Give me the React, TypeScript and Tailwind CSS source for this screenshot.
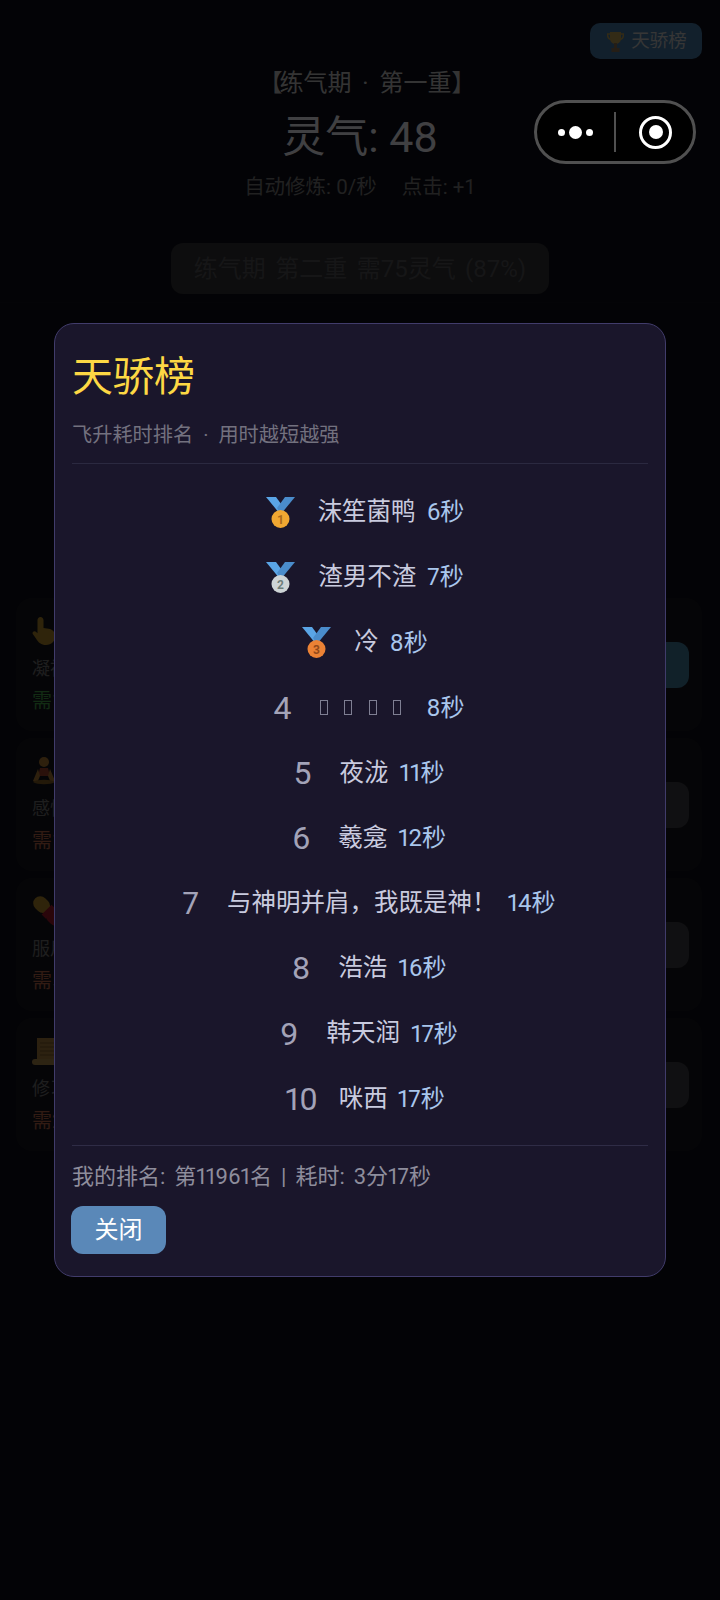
type Entry = { rank: number; name: string; time: string };

const entries: Entry[] = [
  { rank: 1, name: "沫笙菌鸭", time: "6秒" },
  { rank: 2, name: "渣男不渣", time: "7秒" },
  { rank: 3, name: "冷", time: "8秒" },
  { rank: 4, name: "", time: "8秒" },
  { rank: 5, name: "夜泷", time: "11秒" },
  { rank: 6, name: "羲龛", time: "12秒" },
  { rank: 7, name: "与神明并肩，我既是神！", time: "14秒" },
  { rank: 8, name: "浩浩", time: "16秒" },
  { rank: 9, name: "韩天润", time: "17秒" },
  { rank: 10, name: "咪西", time: "17秒" },
];

const medalFill: Record<number, { disc: string; digit: string }> = {
  1: { disc: "#f0a732", digit: "#a8671a" },
  2: { disc: "#ced4d6", digit: "#6f7f7c" },
  3: { disc: "#ec8235", digit: "#93491a" },
};

function Medal({ rank }: { rank: number }) {
  const { disc, digit } = medalFill[rank];
  return (
    <svg width="29" height="31" viewBox="0 0 29 31" className="mr-[23px] shrink-0">
      <path d="M0 0h10l8 11-4 6z" fill="#5aa5e6" />
      <path d="M29 0H19l-8 11 4 6z" fill="#4a8ccb" />
      <circle cx="14.5" cy="22" r="9" fill={disc} />
      <text x="14.5" y="26.5" textAnchor="middle" fontSize="12" fontWeight="700" fill={digit}>
        {rank}
      </text>
    </svg>
  );
}

// names the device font had no glyphs for come out as empty boxes
function MissingGlyphs() {
  return (
    <span className="ml-[-8px] mr-[6px] flex">
      {[0, 1, 2, 3].map((i) => (
        <span key={i} className="flex w-[24.5px] justify-center">
          <span className="h-[15px] w-[8px] border border-[#7f7f93]" />
        </span>
      ))}
    </span>
  );
}

function rowIndent(rank: number) {
  if (rank <= 3) return "pl-[10px]";
  return rank === 10 ? "pl-[10px]" : "pl-[18px]";
}

function Row({ entry }: { entry: Entry }) {
  const hasMedal = entry.rank <= 3;
  return (
    <div className={`flex h-[65.2px] items-center justify-center proportional-nums ${rowIndent(entry.rank)}`}>
      {hasMedal ? (
        <Medal rank={entry.rank} />
      ) : (
        <span className={`text-[32px] leading-none text-[#a3a3b8] ${entry.rank === 10 ? "mr-[21px]" : "mr-[28px]"}`}>
          {entry.rank}
        </span>
      )}
      {entry.name ? (
        <span className="text-[24.5px] leading-none text-[#c9cbdf]">{entry.name}</span>
      ) : (
        <MissingGlyphs />
      )}
      <span className={`text-[24px] leading-none text-[#a9c6ec] ${entry.rank === 10 ? "ml-[10px]" : "ml-[11px]"}`}>
        {entry.time}
      </span>
    </div>
  );
}

function HandIcon() {
  return (
    <svg width="24" height="30" viewBox="0 0 24 30" className="opacity-60">
      <path
        d="M8.500 1c1.700 0 3 1.300 3 3.200V12l5 .8c4 .8 6.500 3 6.500 7.200 0 5.500-3.500 9-9 9-4.800 0-7.500-2.200-10-6.500L.8 18c-1-2 1.700-3.700 3.400-2l1.300 1.200V4.200C5.500 2.300 6.800 1 8.500 1z"
        fill="#fbc02d"
      />
    </svg>
  );
}

function MeditateIcon() {
  return (
    <svg width="24" height="30" viewBox="0 0 24 30" className="opacity-60">
      <circle cx="12" cy="6" r="5" fill="#f6a93b" />
      <path d="M8 12h8l2 8H6z" fill="#e0532f" />
      <path d="M6 13 1 25l4 2 3-7zM18 13l5 12-4 2-3-7z" fill="#f6a93b" />
      <path d="M1 26c4-3 18-3 22 0-4 3-18 3-22 0z" fill="#b98222" />
    </svg>
  );
}

function PillIcon() {
  return (
    <svg width="32" height="30" viewBox="0 0 32 30" className="opacity-60">
      <g transform="rotate(45 16 15)">
        <rect x="-2" y="8" width="18" height="14" rx="7" fill="#fbc02d" />
        <rect x="16" y="8" width="18" height="14" rx="7" fill="#e0182d" />
        <rect x="14" y="8" width="6" height="14" fill="#e0182d" />
      </g>
    </svg>
  );
}

function ScrollIcon() {
  return (
    <svg width="32" height="30" viewBox="0 0 32 30" className="opacity-60">
      <rect x="5" y="2" width="27" height="22" fill="#e8b04a" />
      <path d="M8 7h24M8 11h24M8 15h24M8 19h24" stroke="#a8782a" strokeWidth="1" />
      <rect x="0" y="23" width="32" height="6" rx="3" fill="#f0bf5c" />
    </svg>
  );
}

const skills = [
  { icon: <HandIcon />, title: "凝神聚气", cost: "需10灵气", costColor: "text-[#3d8f41]", button: "bg-[#3a6f8a]" },
  { icon: <MeditateIcon />, title: "感悟天地", cost: "需100灵气", costColor: "text-[#a35a40]", button: "bg-[#38383c]" },
  { icon: <PillIcon />, title: "服用丹药", cost: "需500灵气", costColor: "text-[#a35a40]", button: "bg-[#38383c]" },
  { icon: <ScrollIcon />, title: "修习功法", cost: "需2000灵气", costColor: "text-[#a35a40]", button: "bg-[#38383c]" },
];

function SkillCard({ skill }: { skill: (typeof skills)[number] }) {
  return (
    <div className="flex h-[133px] items-center justify-between rounded-[16px] bg-[#13131a] pl-[16px] pr-[13px]">
      <div className="flex flex-col">
        <div className="flex h-[36px] items-center">{skill.icon}</div>
        <span className="mt-[4px] text-[18px] leading-[32px] text-[#666]">{skill.title}</span>
        <span className={`text-[20px] leading-[32px] ${skill.costColor}`}>{skill.cost}</span>
      </div>
      <div className={`h-[46px] w-[96px] rounded-[12px] ${skill.button}`} />
    </div>
  );
}

function Leaderboard() {
  return (
    <div className="w-[612px] rounded-[20px] border border-[#413c6b] bg-[#1a162b] px-[17px] pb-[22px] pt-[27px]">
      <h2 className="text-[41px] leading-[52px] text-[#fdd844]">天骄榜</h2>
      <p className="mt-[18px] text-[20.2px] leading-[28px] text-[#73717f] [word-spacing:5px]">飞升耗时排名 · 用时越短越强</p>
      <div className="mt-[14px] border-t border-[#2b2940]" />
      <div className="mt-[16px]">
        {entries.map((entry) => (
          <Row key={entry.rank} entry={entry} />
        ))}
      </div>
      <div className="mt-[14px] border-t border-[#2f2c46]" />
      <p className="mt-[16px] text-[22px] leading-[30px] text-[#8e8d9c] proportional-nums [word-spacing:3.5px]">
        我的排名: 第11961名 | 耗时: 3分17秒
      </p>
      <button className="ml-[-1px] mt-[14px] block h-[48px] w-[95px] rounded-[12px] bg-[#5a88b8] text-[24px] text-white">
        关闭
      </button>
    </div>
  );
}

export default function App() {
  return (
    <div
      className="relative h-[1600px] w-[720px] overflow-hidden bg-[#0b0b14]"
      style={{ fontFamily: 'Roboto, "Noto Sans CJK SC", sans-serif' }}
    >
      <div className="flex justify-end pr-[18px] pt-[23px]">
        <div className="flex h-[36px] w-[112px] items-center justify-center rounded-[10px] bg-[#3f6d94] pl-[2px] pt-[2px] text-[18.5px] text-[#b5b5b5]">
          <svg width="17" height="20" viewBox="0 0 17 20" className="mr-[7px] opacity-60">
            <path d="M3 0h11v6c0 3.500-2 6-5.500 6S3 9.500 3 6z" fill="#f2a71b" />
            <path d="M3 2H.5c0 3 1 5 3.500 5.500M14 2h2.500c0 3-1 5-3.500 5.500" fill="none" stroke="#f2a71b" strokeWidth="1.500" />
            <path d="M7 11h3v5H7zM4.500 16h8v4h-8z" fill="#a8641a" />
          </svg>
          天骄榜
        </div>
      </div>

      <div className="mt-[8px] flex flex-col items-center">
        <p className="pl-[14px] text-[24px] leading-[32px] text-[#b0b0b0] [word-spacing:5px]">
          <span className="mr-[-3px]">【</span>练气期 · 第一重】
        </p>
        <p className="mt-[10px] text-[43px] leading-[56px] text-[#d5d5de]">灵气: 48</p>
        <p className="mt-[7px] flex gap-[25px] text-[20.5px] leading-[30px] text-[#6e6e6e]">
          <span>自动修炼: 0/秒</span>
          <span>点击: +1</span>
        </p>
        <div className="mt-[41px] flex h-[51px] w-[378px] items-center justify-center rounded-[12px] bg-[#2c2c2f] text-[24px] text-[#4a4a4e] [word-spacing:3.5px]">
          练气期 第二重 需75灵气 (87%)
        </div>
      </div>

      <div className="mt-[8px] h-[296px] border-t border-[#101019]" />

      <div className="flex flex-col gap-[7px] pl-[16px] pr-[18px]">
        {skills.map((skill) => (
          <SkillCard key={skill.title} skill={skill} />
        ))}
      </div>

      {/* dimmed backdrop with the dialog centred on it */}
      <div className="absolute inset-0 flex items-center justify-center bg-black/70">
        <Leaderboard />
      </div>

      {/* mini program capsule, always on top */}
      <div className="absolute left-[534px] top-[100px] flex h-[64px] w-[162px] items-center rounded-full border-[3px] border-[#505050] bg-black">
        <div className="flex w-[78px] items-center justify-center gap-[4px] pr-[2px]">
          <span className="h-[7px] w-[7px] rounded-full bg-white" />
          <span className="h-[13px] w-[13px] rounded-full bg-white" />
          <span className="h-[7px] w-[7px] rounded-full bg-white" />
        </div>
        <span className="ml-[-1px] h-[40px] w-[2px] bg-[#505050]" />
        <div className="flex flex-1 items-center justify-center pl-[2px]">
          <span className="flex h-[33px] w-[33px] items-center justify-center rounded-full border-[3px] border-white">
            <span className="h-[14px] w-[14px] rounded-full bg-white" />
          </span>
        </div>
      </div>
    </div>
  );
}
